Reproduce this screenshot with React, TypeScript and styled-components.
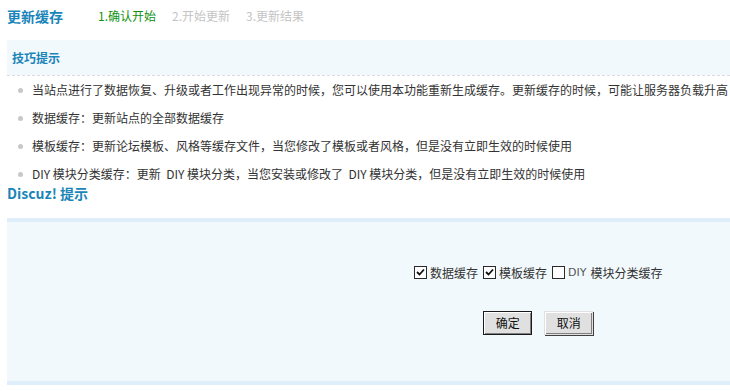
import styled, { createGlobalStyle } from "styled-components";

// start of styled-components
const GlobalStyle = createGlobalStyle`
  html, body {
    margin: 0;
    padding: 0;
    background: #ffffff;
  }
  body {
    font-family: "Noto Sans CJK SC", "DejaVu Sans", sans-serif;
    font-size: 12px;
    color: #333333;
  }
  ul {
    margin: 0;
    padding: 0;
    list-style: none;
  }
`;
const Page = styled.div`
  width: 730px;
  height: 391px;
  overflow: hidden;
  padding: 6px 0 0 7px;
  box-sizing: border-box;
`;
const TitleBar = styled.div`
  display: flex;
  align-items: center;
  height: 20px;
  margin-bottom: 14px;
`;
const PageTitle = styled.h3`
  margin: 0 16px 0 0;
  font-size: 14px;
  font-weight: 700;
  line-height: 20px;
  color: #1a85b9;
  width: 75px;
`;
const Step = styled.span<{ $current?: boolean }>`
  margin-right: 16px;
  line-height: 20px;
  color: ${(props) => (props.$current ? "#0f930f" : "#c4c4c4")};
`;
const TipHeader = styled.div`
  height: 35px;
  background: #f2f9fd;
  display: flex;
  align-items: center;
  padding-left: 5px;
  font-weight: 700;
  color: #1a85b9;
`;
const TipList = styled.ul`
  border-top: 1px dashed #dcdcdc;
`;
const TipItem = styled.li`
  position: relative;
  padding: 5px 0 5px 25px;
  line-height: 18px;
  white-space: pre;
  &:last-child {
    padding-bottom: 1px;
  }
  &::before {
    content: "";
    position: absolute;
    left: 11px;
    top: 12px;
    width: 5px;
    height: 5px;
    border-radius: 50%;
    background: #c8c8c8;
  }
`;
const SectionTitle = styled.h3`
  margin: 0 0 16px 0;
  font-size: 14px;
  font-weight: 700;
  line-height: 18px;
  color: #1a85b9;
`;
const FormBox = styled.div`
  height: 118px;
  background: #f2f9fd;
  border-top: 4px solid #deeffb;
  border-bottom: 4px solid #deeffb;
  padding: 41px 0 0 407px;
`;
const FormInner = styled.div`
  display: inline-flex;
  flex-direction: column;
  align-items: center;
`;
const OptionRow = styled.div`
  display: flex;
  align-items: center;
  height: 18px;
  margin-bottom: 29px;
`;
const Option = styled.label`
  display: flex;
  align-items: center;
  margin-right: 5px;
  color: #333333;
  &:last-child {
    margin-right: 0;
  }
`;
const Box = styled.span`
  width: 11px;
  height: 11px;
  border: 1px solid #2a2a2a;
  background: #ffffff;
  margin-right: 3px;
  display: flex;
  align-items: center;
  justify-content: center;
`;
const Latin = styled.span`
  font-family: "DejaVu Sans", sans-serif;
  font-size: 11px;
  color: #555555;
  margin-right: 4px;
`;
const ButtonRow = styled.div`
  display: flex;
  gap: 12px;
`;
const Button = styled.button<{ $default?: boolean }>`
  width: 49px;
  height: 24px;
  padding: 0;
  font-family: "Noto Sans CJK SC", sans-serif;
  font-size: 12px;
  color: #111111;
  background: #e0e0e0;
  border: 1px solid ${(props) => (props.$default ? "#1a1a1a" : "#e0e0e0")};
  box-shadow: ${(props) =>
    props.$default
      ? "inset 1px 1px 0 #ffffff, inset -1px -1px 0 #808080"
      : "inset 1px 1px 0 #ffffff, inset -1px -1px 0 #808080, 1px 1px 0 #404040"};
  cursor: pointer;
`;
// end of styled components

function Check({ checked }: { checked: boolean }) {
  return (
    <Box>
      {checked && (
        <svg width="9" height="9" viewBox="0 0 9 9">
          <path d="M1 4 L3.5 6.5 L8 1.5" stroke="#111" strokeWidth="1.8" fill="none" />
        </svg>
      )}
    </Box>
  );
}

const tips = [
  "当站点进行了数据恢复、升级或者工作出现异常的时候，您可以使用本功能重新生成缓存。更新缓存的时候，可能让服务器负载升高",
  "数据缓存：更新站点的全部数据缓存",
  "模板缓存：更新论坛模板、风格等缓存文件，当您修改了模板或者风格，但是没有立即生效的时候使用",
  "DIY 模块分类缓存：更新  DIY 模块分类，当您安装或修改了  DIY 模块分类，但是没有立即生效的时候使用",
];

function App() {
  return (
    <Page>
      <GlobalStyle />
      <TitleBar>
        <PageTitle>更新缓存</PageTitle>
        <Step $current>1.确认开始</Step>
        <Step>2.开始更新</Step>
        <Step>3.更新结果</Step>
      </TitleBar>
      <TipHeader>技巧提示</TipHeader>
      <TipList>
        {tips.map((tip, index) => (
          <TipItem key={index}>{tip}</TipItem>
        ))}
      </TipList>
      <SectionTitle>Discuz! 提示</SectionTitle>
      <FormBox>
        <FormInner>
          <OptionRow>
            <Option>
              <Check checked />
              数据缓存
            </Option>
            <Option>
              <Check checked />
              模板缓存
            </Option>
            <Option>
              <Check checked={false} />
              <Latin>DIY</Latin>模块分类缓存
            </Option>
          </OptionRow>
          <ButtonRow>
            <Button $default>确定</Button>
            <Button>取消</Button>
          </ButtonRow>
        </FormInner>
      </FormBox>
    </Page>
  );
}

export default App;
